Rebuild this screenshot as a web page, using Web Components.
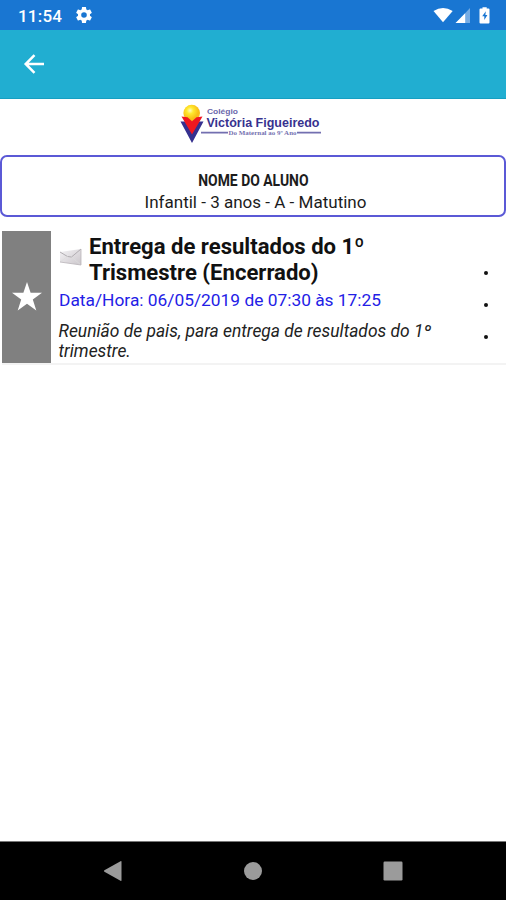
<!DOCTYPE html>
<html lang="pt-BR">
<head>
  <meta charset="utf-8">
  <title>Colégio Victória Figueiredo</title>
  <style>
    body {
      background: #fff;
      font-family: Roboto, "Liberation Sans", sans-serif;
      margin: 0;
    }
  </style>
</head>
<body>
  <school-app>
    <status-bar slot="top" time="11:54"></status-bar>
    <tool-bar slot="top"></tool-bar>
    <school-logo></school-logo>
    <student-card>
      <span slot="name">NOME DO ALUNO</span>
      <span slot="group">Infantil - 3 anos - A - Matutino</span>
    </student-card>
    <event-item>
      <span slot="title">Entrega de resultados do 1º<br>Trismestre (Encerrado)</span>
      <span slot="date">Data/Hora: 06/05/2019 de 07:30 às 17:25</span>
      <span slot="text">Reunião de pais, para entrega de resultados do 1º<br>trimestre.</span>
    </event-item>
    <nav-bar slot="bottom"></nav-bar>
  </school-app>

  <script>
    // Registers an element whose shadow root is cloned from the given markup
    const define = (name, html, setup) => {
      const template = document.createElement('template');
      template.innerHTML = html;

      customElements.define(name, class extends HTMLElement {
        constructor() {
          super();
          this.attachShadow({ mode: 'open' });
          this.shadowRoot.appendChild(template.content.cloneNode(true));
        }

        connectedCallback() {
          if (setup) setup(this);
        }
      });
    };

    define('school-app', `
      <style>
        :host {
          display: flex;
          flex-direction: column;
          height: 900px;
          overflow: hidden;
        }

        main {
          flex: 1;
        }
      </style>
      <slot name="top"></slot>
      <main><slot></slot></main>
      <slot name="bottom"></slot>
    `);

    define('status-bar', `
      <style>
        :host {
          align-items: center;
          background: #1976d2;
          box-sizing: border-box;
          color: #fff;
          display: flex;
          height: 30px;
          padding: 0 15px 0 18px;
        }

        .time {
          font-size: 17px;
          font-weight: 500;
          letter-spacing: 0.2px;
          line-height: 30px;
          padding-top: 2px;
          width: 58px;
        }

        .icons {
          display: flex;
          margin-left: auto;
        }

        svg {
          display: block;
          fill: currentColor;
        }
      </style>
      <span class="time"></span>
      <svg width="16" height="16" viewBox="2 2 20 20"><path d="M19.430 12.980c.04-.32.07-.64.07-.98s-.03-.66-.07-.98l2.110-1.650c.19-.15.24-.42.12-.64l-2-3.460c-.12-.22-.39-.3-.61-.22l-2.490 1c-.52-.4-1.080-.73-1.690-.98l-.38-2.650C14.460 2.180 14.250 2 14 2h-4c-.25 0-.46.18-.49.42l-.38 2.650c-.61.25-1.170.59-1.690.98l-2.490-1c-.23-.09-.49 0-.61.22l-2 3.460c-.13.22-.07.49.12.64l2.110 1.650c-.04.32-.07.65-.07.98s.03.66.07.98l-2.110 1.650c-.19.15-.24.42-.12.64l2 3.460c.12.22.39.3.61.22l2.490-1c.52.4 1.080.73 1.690.98l.38 2.650c.03.24.24.42.49.42h4c.25 0 .46-.18.49-.42l.38-2.650c.61-.25 1.170-.59 1.690-.98l2.490 1c.23.09.49 0 .61-.22l2-3.460c.12-.22.07-.49-.12-.64l-2.110-1.650zM12 15.500a3.500 3.500 0 1 1 0-7 3.500 3.500 0 0 1 0 7z"/></svg>
      <div class="icons">
        <svg width="58" height="18" viewBox="0 0 58 18">
          <path d="M.5 5Q10-1.200 19.700 5L10 16.300z"/>
          <path d="M37 2v15H23z" opacity=".4"/>
          <path d="M32.200 7.200V17H22.500z"/>
          <path fill-rule="evenodd" d="M47.500 2.600h2V1.200h4.200v1.400h1.800q1 0 1 1v13q0 1-1 1h-8q-1 0-1-1v-13q0-1 1-1zM52.800 5.300l-3.600 5h2.100v3.800l3.100-5.200h-2z"/>
        </svg>
      </div>
    `, (el) => {
      el.shadowRoot.querySelector('.time').textContent = el.getAttribute('time');
    });

    define('tool-bar', `
      <style>
        :host {
          align-items: center;
          background: #21aed1;
          border-bottom: 1px solid #169fc2;
          box-sizing: border-box;
          display: flex;
          height: 69px;
          padding-left: 21px;
        }

        svg {
          fill: none;
          stroke: #fff;
          stroke-width: 2.500;
        }
      </style>
      <svg width="26" height="26" viewBox="0 0 26 26"><path d="M23 13H4.500M13.500 4.200L4.700 13l8.800 8.800"/></svg>
    `);

    define('school-logo', `
      <style>
        :host {
          display: flex;
          height: 56px;
          justify-content: center;
        }

        svg {
          font-family: "Liberation Sans", sans-serif;
          margin-right: 4px;
        }
      </style>
      <svg width="146" height="50" viewBox="178 99 146 50">
        <defs>
          <radialGradient id="sun" cx=".4" cy=".35">
            <stop offset="0" stop-color="#fffbc0"/>
            <stop offset=".4" stop-color="#ffe92e"/>
            <stop offset="1" stop-color="#f8bd16"/>
          </radialGradient>
        </defs>
        <path d="M180.500 121.500h5l6.500 11 6.500-11h5L192 143z" fill="#35308f"/>
        <circle cx="191.700" cy="113" r="8.300" fill="url(#sun)"/>
        <path d="M181.500 116.500l6 .7 4.500 4 4.500-4 6-.7L192 134.500z" fill="#f01820"/>
        <g fill="#37328f">
          <text x="207" y="113.500" font-size="8" font-weight="bold" textLength="31" lengthAdjust="spacingAndGlyphs" opacity=".75">Colégio</text>
          <text x="206.500" y="127" font-size="12.300" font-weight="bold" textLength="113" lengthAdjust="spacingAndGlyphs">Victória Figueiredo</text>
          <path d="M201 131.800h27v1.600h-27zM297 131.800h24v1.600h-24z" opacity=".7"/>
          <text x="228.500" y="135" font-family="Liberation Serif, serif" font-size="6" font-weight="bold" textLength="68" lengthAdjust="spacingAndGlyphs" opacity=".7">Do Maternal ao 9º Ano</text>
        </g>
      </svg>
    `);

    define('student-card', `
      <style>
        :host {
          align-items: center;
          border: 2px solid #5b59d6;
          border-radius: 7px;
          box-sizing: border-box;
          color: #1c1c1c;
          display: flex;
          flex-direction: column;
          height: 62px;
          padding-top: 12px;
        }

        .name {
          font-size: 16px;
          font-weight: 700;
          line-height: 22px;
          margin-left: 1px;
          transform: translateY(0.5px) scaleX(0.87);
        }

        .group {
          font-size: 17.050px;
          line-height: 22px;
          margin-left: 5px;
        }
      </style>
      <div class="name"><slot name="name"></slot></div>
      <div class="group"><slot name="group"></slot></div>
    `);

    define('event-item', `
      <style>
        :host {
          border-bottom: 2px solid #f3f3f3;
          display: flex;
          height: 132px;
          margin: 14px 0 0 2px;
        }

        .mark {
          align-items: center;
          background: #808080;
          box-sizing: border-box;
          display: flex;
          justify-content: center;
          padding-bottom: 2px;
          width: 49px;
        }

        .body {
          flex: 1;
          padding: 3px 0 0 8px;
          white-space: nowrap;
        }

        .head {
          display: flex;
        }

        .head svg {
          margin: 13px 7px 0 0;
        }

        .title {
          color: #111;
          font-size: 22.080px;
          font-weight: 700;
          line-height: 26px;
        }

        .date {
          color: #2320e6;
          font-size: 17.350px;
          line-height: 28px;
        }

        .text {
          color: #222;
          font-size: 17.420px;
          font-style: italic;
          line-height: 20px;
          margin: 7px 0 0 -0.5px;
        }

        .dots {
          display: flex;
          flex-direction: column;
          gap: 28px;
          padding: 40px 18px 0 0;
        }

        .dots i {
          background: #111;
          border-radius: 50%;
          height: 4px;
          width: 4px;
        }
      </style>
      <div class="mark">
        <svg width="30" height="29" viewBox="0 0 30 29"><path fill="#fff" d="M15 0l3.600 10.800H30l-9.200 6.800L24.300 28.500 15 21.800 5.700 28.500l3.500-10.900L0 10.800h11.400z"/></svg>
      </div>
      <div class="body">
        <div class="head">
          <svg width="23" height="20" viewBox="0 0 23 20">
            <defs>
              <linearGradient id="paper" x1="0" y1="0" x2="1" y2="1">
                <stop offset="0" stop-color="#f4f3f5"/>
                <stop offset="1" stop-color="#cbc6cb"/>
              </linearGradient>
            </defs>
            <path d="M1 5L22 2v16L1 15z" fill="url(#paper)"/>
            <path d="M1 5l7.500 4.500 4 .5L22 2" fill="none" stroke="#aca7ac" stroke-width=".9"/>
            <path d="M1 15l7.500-5.500M22 18l-9.500-8" fill="none" stroke="#ddd" stroke-width=".7"/>
            <path d="M22 2v16L1 15" fill="none" stroke="#b9b4b9" stroke-width=".8"/>
          </svg>
          <div class="title"><slot name="title"></slot></div>
        </div>
        <div class="date"><slot name="date"></slot></div>
        <div class="text"><slot name="text"></slot></div>
      </div>
      <div class="dots"><i></i><i></i><i></i></div>
    `);

    define('nav-bar', `
      <style>
        :host {
          align-items: center;
          background: #000;
          border-top: 1px solid #777;
          box-sizing: border-box;
          display: grid;
          grid-template-columns: repeat(3, 140px);
          height: 59px;
          justify-content: center;
          justify-items: center;
        }

        svg {
          display: block;
          fill: #9b9b9b;
        }
      </style>
      <svg width="20" height="22" viewBox="0 0 20 22"><path d="M17.500 1.200q1-.5 1 .5v18.600q0 1-1 .5L1.400 11.700q-1-.7 0-1.400z"/></svg>
      <svg width="20" height="20" viewBox="0 0 20 20"><circle cx="10" cy="10" r="9"/></svg>
      <svg width="20" height="20" viewBox="0 0 20 20"><rect x=".5" y=".5" width="19" height="19" rx="1.200"/></svg>
    `);
  </script>
</body>
</html>
